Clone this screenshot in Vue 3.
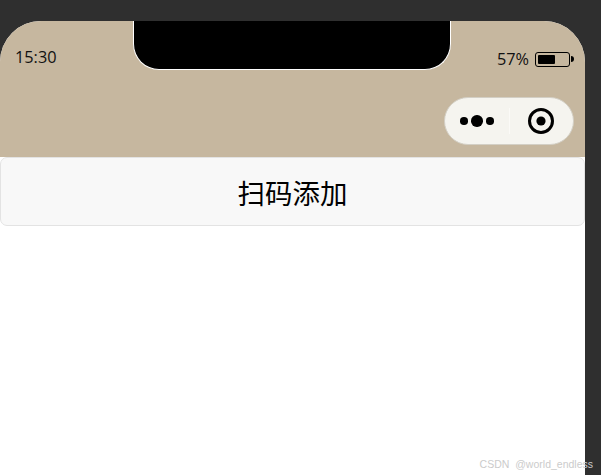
<script setup>
// Pantalla simple: cabecera del móvil y botón de escaneo
const hora = '15:30'
const bateria = 57
</script>

<template>
  <div class="pagina">
    <div class="telefono">
      <header class="cabecera">
        <div class="notch"></div>
        <div class="estado">
          <span class="hora">{{ hora }}</span>
          <div class="bateria-box">
            <span class="porcentaje">{{ bateria }}%</span>
            <div class="bateria">
              <div class="nivel" :style="{ width: bateria + '%' }"></div>
            </div>
            <div class="polo"></div>
          </div>
        </div>
        <div class="fila-capsula">
          <div class="capsula">
            <div class="puntos">
              <i class="punto"></i>
              <i class="punto grande"></i>
              <i class="punto"></i>
            </div>
            <div class="separador"></div>
            <div class="objetivo">
              <svg width="28" height="28" viewBox="0 0 28 28">
                <circle cx="14" cy="14" r="11.5" fill="none" stroke="#000" stroke-width="3" />
                <circle cx="14" cy="14" r="4.6" fill="#000" />
              </svg>
            </div>
          </div>
        </div>
      </header>
      <button class="btn-scan" type="button">扫码添加</button>
    </div>
    <span class="marca">CSDN @world_endless</span>
  </div>
</template>

<style scoped>
.pagina {
  position: relative;
  width: 601px;
  height: 475px;
  padding-top: 21px;
  box-sizing: border-box;
  background: #2f2f2f;
  overflow: hidden;
}

.telefono {
  width: 585px;
  height: 454px;
  background: #fff;
  border-radius: 41px 41px 0 0;
  overflow: hidden;
}

.cabecera {
  position: relative;
  height: 136px;
  background: #c6b79f;
}

.notch {
  position: absolute;
  top: -1px;
  left: 133px;
  width: 316px;
  height: 49px;
  background: #000;
  border: 1px solid #fff;
  border-top: none;
  border-radius: 0 0 26px 26px;
}

.estado {
  display: flex;
  justify-content: space-between;
  align-items: flex-start;
  padding: 26px 11px 0 15px;
  height: 50px;
  box-sizing: border-box;
  font-family: "Open Sans", "Liberation Sans", sans-serif;
  font-size: 16.3px;
  line-height: 20px;
  color: #111;
}

.bateria-box {
  display: flex;
  align-items: center;
  padding-top: 2px;
}

.porcentaje {
  margin-right: 6px;
}

.bateria {
  width: 35px;
  height: 15px;
  box-sizing: border-box;
  border: 1px solid #000;
  border-radius: 3px;
  padding: 2px;
}

.nivel {
  height: 100%;
  background: #000;
  border-radius: 1px;
}

.polo {
  width: 3px;
  height: 6px;
  margin-left: 1px;
  background: #000;
  border-radius: 0 3px 3px 0;
}

.fila-capsula {
  display: flex;
  justify-content: flex-end;
  padding: 26px 11px 0 0;
}

.capsula {
  display: flex;
  align-items: center;
  width: 130px;
  height: 48px;
  box-sizing: border-box;
  background: #f5f4ef;
  border: 1px solid #d3cfc5;
  border-radius: 24px;
}

.puntos {
  display: flex;
  align-items: center;
  gap: 3.5px;
  width: 64px;
  justify-content: center;
}

.punto {
  display: block;
  width: 7.5px;
  height: 7.5px;
  border-radius: 50%;
  background: #000;
}

.punto.grande {
  width: 11.5px;
  height: 11.5px;
}

.separador {
  width: 1px;
  height: 26px;
  background: #fbfaf7;
}

.objetivo {
  flex: 1;
  display: flex;
  justify-content: center;
  align-items: center;
  padding-right: 2px;
}

.btn-scan {
  display: block;
  width: 100%;
  height: 69px;
  padding: 0;
  background: #f8f8f8;
  border: 1px solid #e3e3e3;
  border-radius: 7px;
  font-family: "Noto Sans CJK SC", sans-serif;
  font-size: 27.5px;
  color: #000;
}

.marca {
  position: absolute;
  right: 8px;
  bottom: 5px;
  font-family: "Liberation Sans", sans-serif;
  font-size: 10.5px;
  word-spacing: 3px;
  color: #cbcbcb;
}
</style>

<style>
body {
  margin: 0;
  background: #2f2f2f;
}
</style>
